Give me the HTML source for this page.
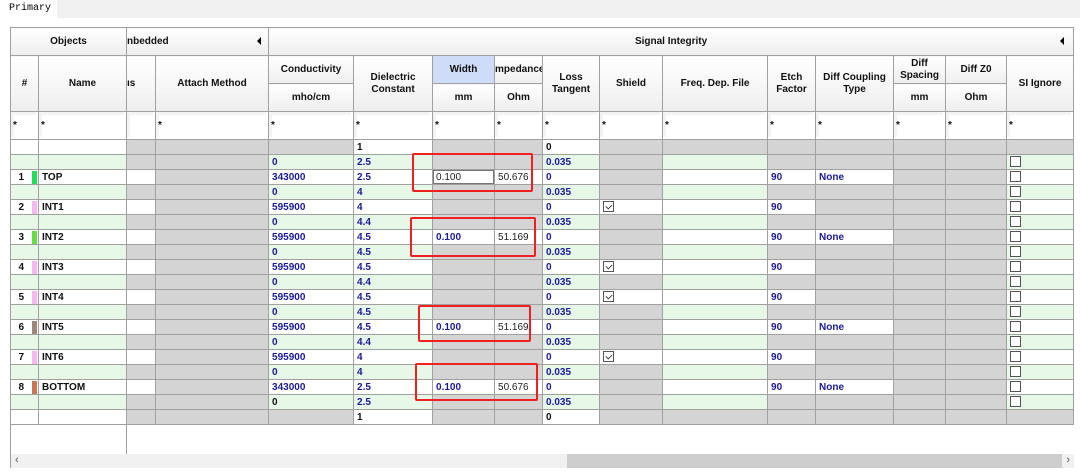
<!DOCTYPE html>
<html><head><meta charset="utf-8">
<style>
*{box-sizing:border-box;margin:0;padding:0}
body{width:1080px;height:476px;background:#fff;position:relative;overflow:hidden;font-family:"Liberation Sans",Tahoma,sans-serif;}
.topbar{position:absolute;left:0;top:0;width:1080px;height:18px;background:#f0f0f0;}
.tab{position:absolute;left:0;top:0;width:57px;height:18px;background:#fff;font:10px "Liberation Mono",monospace;padding:3px 0 0 9px;color:#000;}
.frame{position:absolute;left:10px;top:27px;width:1064px;height:441px;border:1px solid #a0a0a0;border-right:none;}
table{position:absolute;left:10px;top:27px;border-collapse:collapse;table-layout:fixed;width:1063px;}
td,th{border:1px solid #a0a0a0;font-size:10px;font-weight:bold;white-space:nowrap;overflow:hidden;padding:0 0 0 3px;text-align:left;color:#1a1a9a;height:15px;line-height:13px;}
th{background:linear-gradient(#fff,#eeeeee);color:#111;text-align:center;font-size:10px;padding:0;line-height:12px;}
th.w{background:#cfdcf8}
.hg th{height:28px}
.h1 th{height:28px}
.h2 th{height:28px}
.f td{height:28px;color:#111;vertical-align:middle;background:#fff;padding-left:2px;box-shadow:inset -2px -2px 0 #fff,inset 3px 3px 0 #f3f3f3;}
.g{background:#d4d4d4}
.e{background:#e8f8e8}
.k{color:#111}
.n{text-align:right;padding-right:14px;color:#111;position:relative}
.n i{position:absolute;right:1px;top:1px;width:5px;height:13px}
.nm{color:#111}
.cb{display:inline-block;width:11px;height:11px;border:1px solid #555;background:#fff;vertical-align:middle;margin-top:-1px;position:relative}
.ck::after{content:"";position:absolute;left:2px;top:2px;width:5px;height:3px;border-left:1px solid #444;border-bottom:1px solid #444;transform:rotate(-45deg)}
.ed{box-shadow:inset 0 0 0 1px #777;font-weight:normal;color:#222}
.iv{font-weight:normal;color:#222}
.tri{position:absolute;width:0;height:0;border-top:4px solid transparent;border-bottom:4px solid transparent;border-right:4px solid #000}
.red{position:absolute;border:2px solid #f02020;border-radius:2px}
.sb{position:absolute;left:11px;top:454px;width:1063px;height:14px;background:#f0f0f0;font-size:11px;color:#555}
.th{position:absolute;left:556px;top:0;width:495px;height:14px;background:#cdcdcd}
</style></head><body>
<div class="topbar"></div><div class="tab">Primary</div>
<div class="frame"></div>
<div style="position:absolute;left:126px;top:420px;width:1px;height:34px;background:#a0a0a0"></div>
<table>
<colgroup><col style="width:28px"><col style="width:88px"><col style="width:29px"><col style="width:113px"><col style="width:85px"><col style="width:79px"><col style="width:62px"><col style="width:48px"><col style="width:57px"><col style="width:63px"><col style="width:105px"><col style="width:48px"><col style="width:78px"><col style="width:52px"><col style="width:61px"><col style="width:67px"></colgroup>
<tr class="hg"><th colspan="2">Objects</th><th colspan="2" style="text-align:left;border-right:none">nbedded</th><th colspan="12">Signal Integrity</th></tr>
<tr class="h1"><th rowspan="2">#</th><th rowspan="2">Name</th><th rowspan="2" style="text-align:left">ıs</th><th rowspan="2">Attach Method</th><th>Conductivity</th><th rowspan="2">Dielectric<br>Constant</th><th class="w">Width</th><th style="text-align:left">mpedance</th><th rowspan="2">Loss<br>Tangent</th><th rowspan="2">Shield</th><th rowspan="2">Freq. Dep. File</th><th rowspan="2">Etch<br>Factor</th><th rowspan="2">Diff Coupling<br>Type</th><th>Diff<br>Spacing</th><th>Diff Z0</th><th rowspan="2">SI Ignore</th></tr>
<tr class="h2"><th>mho/cm</th><th>mm</th><th>Ohm</th><th>mm</th><th>Ohm</th></tr>
<tr class="f"><td>*</td><td>*</td><td></td><td>*</td><td>*</td><td>*</td><td>*</td><td>*</td><td>*</td><td>*</td><td>*</td><td>*</td><td>*</td><td>*</td><td>*</td><td>*</td></tr>
<tr><td></td><td></td><td class="g"></td><td class="g"></td><td class="g"></td><td class="k">1</td><td class="g"></td><td class="g"></td><td class="k">0</td><td class="g"></td><td class="g"></td><td class="g"></td><td class="g"></td><td class="g"></td><td class="g"></td><td class="g"></td></tr>
<tr><td class="e"></td><td class="e"></td><td class="g"></td><td class="g"></td><td class="e">0</td><td class="e">2.5</td><td class="g"></td><td class="g"></td><td class="e">0.035</td><td class="g"></td><td class="e"></td><td class="g"></td><td class="g"></td><td class="g"></td><td class="g"></td><td class="e"><span class="cb"></span></td></tr>
<tr><td class="n">1<i style="background:#22dd55"></i></td><td class="nm">TOP</td><td></td><td class="g"></td><td>343000</td><td>2.5</td><td class="ed">0.100</td><td class="iv">50.676</td><td>0</td><td class="g"></td><td></td><td>90</td><td>None</td><td class="g"></td><td class="g"></td><td><span class="cb"></span></td></tr>
<tr><td class="e"></td><td class="e"></td><td class="g"></td><td class="g"></td><td class="e">0</td><td class="e">4</td><td class="g"></td><td class="g"></td><td class="e">0.035</td><td class="g"></td><td class="e"></td><td class="g"></td><td class="g"></td><td class="g"></td><td class="g"></td><td class="e"><span class="cb"></span></td></tr>
<tr><td class="n">2<i style="background:#f6b8f0"></i></td><td class="nm">INT1</td><td></td><td class="g"></td><td>595900</td><td>4</td><td class="g"></td><td class="g"></td><td>0</td><td><span class="cb ck"></span></td><td></td><td>90</td><td class="g"></td><td class="g"></td><td class="g"></td><td><span class="cb"></span></td></tr>
<tr><td class="e"></td><td class="e"></td><td class="g"></td><td class="g"></td><td class="e">0</td><td class="e">4.4</td><td class="g"></td><td class="g"></td><td class="e">0.035</td><td class="g"></td><td class="e"></td><td class="g"></td><td class="g"></td><td class="g"></td><td class="g"></td><td class="e"><span class="cb"></span></td></tr>
<tr><td class="n">3<i style="background:#66dd44"></i></td><td class="nm">INT2</td><td></td><td class="g"></td><td>595900</td><td>4.5</td><td>0.100</td><td class="iv">51.169</td><td>0</td><td class="g"></td><td></td><td>90</td><td>None</td><td class="g"></td><td class="g"></td><td><span class="cb"></span></td></tr>
<tr><td class="e"></td><td class="e"></td><td class="g"></td><td class="g"></td><td class="e">0</td><td class="e">4.5</td><td class="g"></td><td class="g"></td><td class="e">0.035</td><td class="g"></td><td class="e"></td><td class="g"></td><td class="g"></td><td class="g"></td><td class="g"></td><td class="e"><span class="cb"></span></td></tr>
<tr><td class="n">4<i style="background:#f6b8f0"></i></td><td class="nm">INT3</td><td></td><td class="g"></td><td>595900</td><td>4.5</td><td class="g"></td><td class="g"></td><td>0</td><td><span class="cb ck"></span></td><td></td><td>90</td><td class="g"></td><td class="g"></td><td class="g"></td><td><span class="cb"></span></td></tr>
<tr><td class="e"></td><td class="e"></td><td class="g"></td><td class="g"></td><td class="e">0</td><td class="e">4.4</td><td class="g"></td><td class="g"></td><td class="e">0.035</td><td class="g"></td><td class="e"></td><td class="g"></td><td class="g"></td><td class="g"></td><td class="g"></td><td class="e"><span class="cb"></span></td></tr>
<tr><td class="n">5<i style="background:#f6b8f0"></i></td><td class="nm">INT4</td><td></td><td class="g"></td><td>595900</td><td>4.5</td><td class="g"></td><td class="g"></td><td>0</td><td><span class="cb ck"></span></td><td></td><td>90</td><td class="g"></td><td class="g"></td><td class="g"></td><td><span class="cb"></span></td></tr>
<tr><td class="e"></td><td class="e"></td><td class="g"></td><td class="g"></td><td class="e">0</td><td class="e">4.5</td><td class="g"></td><td class="g"></td><td class="e">0.035</td><td class="g"></td><td class="e"></td><td class="g"></td><td class="g"></td><td class="g"></td><td class="g"></td><td class="e"><span class="cb"></span></td></tr>
<tr><td class="n">6<i style="background:#a08878"></i></td><td class="nm">INT5</td><td></td><td class="g"></td><td>595900</td><td>4.5</td><td>0.100</td><td class="iv">51.169</td><td>0</td><td class="g"></td><td></td><td>90</td><td>None</td><td class="g"></td><td class="g"></td><td><span class="cb"></span></td></tr>
<tr><td class="e"></td><td class="e"></td><td class="g"></td><td class="g"></td><td class="e">0</td><td class="e">4.4</td><td class="g"></td><td class="g"></td><td class="e">0.035</td><td class="g"></td><td class="e"></td><td class="g"></td><td class="g"></td><td class="g"></td><td class="g"></td><td class="e"><span class="cb"></span></td></tr>
<tr><td class="n">7<i style="background:#f6b8f0"></i></td><td class="nm">INT6</td><td></td><td class="g"></td><td>595900</td><td>4</td><td class="g"></td><td class="g"></td><td>0</td><td><span class="cb ck"></span></td><td></td><td>90</td><td class="g"></td><td class="g"></td><td class="g"></td><td><span class="cb"></span></td></tr>
<tr><td class="e"></td><td class="e"></td><td class="g"></td><td class="g"></td><td class="e">0</td><td class="e">4</td><td class="g"></td><td class="g"></td><td class="e">0.035</td><td class="g"></td><td class="e"></td><td class="g"></td><td class="g"></td><td class="g"></td><td class="g"></td><td class="e"><span class="cb"></span></td></tr>
<tr><td class="n">8<i style="background:#c87858"></i></td><td class="nm">BOTTOM</td><td></td><td class="g"></td><td>343000</td><td>2.5</td><td>0.100</td><td class="iv">50.676</td><td>0</td><td class="g"></td><td></td><td>90</td><td>None</td><td class="g"></td><td class="g"></td><td><span class="cb"></span></td></tr>
<tr><td class="e"></td><td class="e"></td><td class="g"></td><td class="g"></td><td class="e k">0</td><td class="e">2.5</td><td class="g"></td><td class="g"></td><td class="e">0.035</td><td class="g"></td><td class="e"></td><td class="g"></td><td class="g"></td><td class="g"></td><td class="g"></td><td class="e"><span class="cb"></span></td></tr>
<tr><td></td><td></td><td class="g"></td><td class="g"></td><td class="g"></td><td class="k">1</td><td class="g"></td><td class="g"></td><td class="k">0</td><td class="g"></td><td class="g"></td><td class="g"></td><td class="g"></td><td class="g"></td><td class="g"></td><td class="g"></td></tr>
</table>
<div class="tri" style="left:257px;top:37px"></div>
<div class="tri" style="left:1060px;top:37px"></div>
<div class="red" style="left:412px;top:153px;width:121px;height:39px"></div>
<div class="red" style="left:410px;top:217px;width:126px;height:40px"></div>
<div class="red" style="left:418px;top:305px;width:113px;height:37px"></div>
<div class="red" style="left:415px;top:363px;width:123px;height:38px"></div>
<div class="sb"><span style="position:absolute;left:4px;top:0">&lsaquo;</span><div class="th"></div><span style="position:absolute;right:4px;top:0">&rsaquo;</span></div>
</body></html>
